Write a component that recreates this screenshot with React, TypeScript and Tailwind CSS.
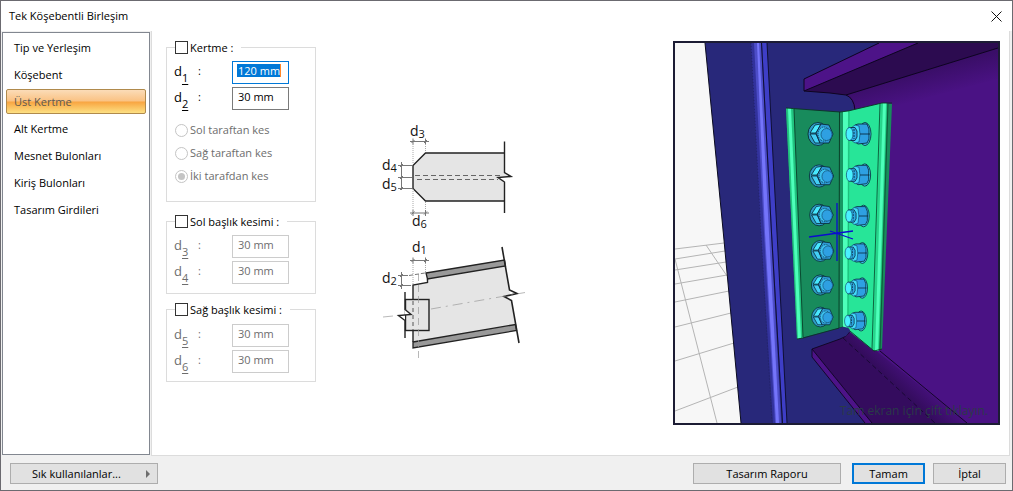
import React from "react";

const menuItems = [
  "Tip ve Yerleşim",
  "Köşebent",
  "Üst Kertme",
  "Alt Kertme",
  "Mesnet Bulonları",
  "Kiriş Bulonları",
  "Tasarım Girdileri",
];

const cutSides = ["Sol taraftan kes", "Sağ taraftan kes", "İki tarafdan kes"];

const leftBolts = [
  { x: 820, y: 134, s: 1 },
  { x: 821, y: 176, s: 0.97 },
  { x: 821, y: 215, s: 0.94 },
  { x: 822, y: 251, s: 0.91 },
  { x: 822, y: 285, s: 0.88 },
  { x: 822, y: 317, s: 0.86 },
];

const rightBolts = [
  { x: 858, y: 134, s: 1 },
  { x: 858, y: 175, s: 0.97 },
  { x: 857, y: 216, s: 0.94 },
  { x: 856, y: 253, s: 0.91 },
  { x: 856, y: 288, s: 0.89 },
  { x: 855, y: 321, s: 0.87 },
];

type FieldProps = {
  index: number;
  value: string;
  disabled?: boolean;
  focused?: boolean;
};

const Field = ({ index, value, disabled, focused }: FieldProps) => {
  const id = `d${index}`;
  return (
    <div className="flex h-[23px] items-start">
      <label
        htmlFor={id}
        className={`flex w-[58px] text-[13px] leading-5 ${disabled ? "text-[#6d6d6d]" : "text-black"}`}
      >
        <span>d</span>
        <span className="mt-[7px] w-4 text-[11px] underline underline-offset-2">
          {index}
        </span>
        <span className="text-[11px]">:</span>
      </label>
      <div className="relative">
        <input
          id={id}
          type="text"
          defaultValue={value}
          disabled={disabled}
          className={`block h-[23px] w-[57px] border bg-white px-[5px] pb-1 text-[11px] leading-4 outline-none ${
            focused
              ? "border-[#0078d7] text-transparent"
              : disabled
                ? "border-[#cccccc] text-[#6d6d6d]"
                : "border-[#7a7a7a] text-black"
          }`}
        />
        {focused && (
          <span className="pointer-events-none absolute left-[5px] top-[3px] whitespace-nowrap border-r border-[#ff8728] bg-[#0078d7] pl-px text-[11px] leading-[13px] text-white">
            {value}
          </span>
        )}
      </div>
    </div>
  );
};

type GroupProps = {
  title: string;
  className?: string;
  children: React.ReactNode;
};

const Group = ({ title, className, children }: GroupProps) => (
  <fieldset className={`w-[150px] border border-[#dcdcdc] px-[7px] ${className}`}>
    <legend className="ml-px h-[13px] pr-2">
      <label className="flex h-[13px] items-center gap-[2px] text-[11px] leading-[13px]">
        <input
          type="checkbox"
          className="size-[13px] appearance-none border border-[#333333] bg-white"
        />
        {title}
      </label>
    </legend>
    {children}
  </fieldset>
);

const SectionDrawing = () => (
  <svg
    viewBox="380 120 145 245"
    className="ml-16 mt-[89px] h-[245px] w-[145px] shrink-0"
    fill="none"
    stroke="#222"
    fontFamily="'Open Sans', 'Noto Sans', sans-serif"
  >
    {/* plan view of the flange */}
    <path
      d="M504 153H425.5L413 165.5V188.5L425.5 201H504V180L498 177.5L509 176.5L504 172Z"
      fill="#e5e5e5"
      stroke="none"
    />
    <path d="M504 153H425.5L413 165.5V188.5L425.5 201H504" strokeWidth="1.4" />
    <path
      d="M504.5 141.5V172.5L511 176.5L498 177.5L504.5 182V213"
      strokeWidth="1.4"
    />
    <path
      d="M415 175.5H500M417 179.5H498"
      stroke="#666"
      strokeDasharray="5 3"
    />
    <g stroke="#777" strokeWidth="1">
      <path d="M410 141.5H429M410 213H429M413 138.500v6M425.5 138.500v6M413 210v6M425.5 210v6M401.5 162v28M398 165.500h14M398 177.500h14M398 188.500h14" />
      <path d="M411.5 143l3-3M424 143l3-3M411.5 214.500l3-3M424 214.500l3-3M400 167l3-3M400 179l3-3M400 190l3-3" />
      <path
        d="M413 144V164M425.5 144V152M413 189V210M425.5 202V210"
        stroke="#aaa"
        strokeDasharray="1 1"
      />
    </g>
    {/* side view of the notched beam */}
    <path
      d="M413 285L427 282.5L426 273L505 259.5L510 294L503.5 297L511 300L516 329L413 348Z"
      fill="#e5e5e5"
      stroke="none"
    />
    <path d="M426 273L504.5 260L505.5 266L427.5 279Z" fill="#999" strokeWidth="1.3" />
    <path d="M413 342L515.5 324.5L516.5 330.5L413 348Z" fill="#999" strokeWidth="1.3" />
    <path d="M427.5 279V282.5L413 285V299M413 331V342" strokeWidth="1.4" />
    <path
      d="M502 247L509.5 290L517 293.5L504 296.5L511.5 300.5L519 343"
      strokeWidth="1.6"
    />
    <rect x="405.5" y="299.5" width="23.5" height="31" fill="#e5e5e5" strokeWidth="1.4" />
    <path d="M398.5 315.5L411 314.5L405 309V321Z" fill="#fff" stroke="none" />
    <path d="M405 292V309.5L411 314.5L398.5 315.5L405 320.5V338" strokeWidth="1.4" />
    <path d="M413 301V330" strokeDasharray="4 3" stroke="#555" />
    <path
      d="M383 317L398 315.5M431 309L528 292"
      stroke="#999"
      strokeWidth="0.7"
      strokeDasharray="10 5 2 5"
    />
    <path d="M418.5 274V360" stroke="#999" strokeWidth="0.7" strokeDasharray="7 4" />
    <g stroke="#777" strokeWidth="1">
      <path d="M410 260.5H429M413 257.500v6M425.5 257.500v6M411.5 262l3-3M424 262l3-3M401.5 272V289M398 275.500h10M398 285.500h13M400 277l3-3M400 287l3-3" />
      <path d="M409 275.5L425 273" strokeDasharray="4 2" />
      <path d="M413 263V284M425.5 263V273" stroke="#aaa" strokeDasharray="1 1" />
    </g>
    <g fill="#111" stroke="none" fontSize="14">
      <text x="410" y="136">d<tspan fontSize="11" dy="2">3</tspan></text>
      <text x="382" y="170">d<tspan fontSize="11" dy="2">4</tspan></text>
      <text x="382" y="189">d<tspan fontSize="11" dy="2">5</tspan></text>
      <text x="412" y="226">d<tspan fontSize="11" dy="2">6</tspan></text>
      <text x="412" y="252">d<tspan fontSize="11" dy="2">1</tspan></text>
      <text x="382" y="283">d<tspan fontSize="11" dy="2">2</tspan></text>
    </g>
  </svg>
);

const LeftBolt = ({ x, y, s }: { x: number; y: number; s: number }) => (
  <g
    transform={`translate(${x} ${y}) scale(${s})`}
    stroke="#06202e"
    strokeWidth="0.8"
    strokeLinejoin="round"
  >
    <ellipse cx="-2" cy="0" rx="10" ry="11.5" fill="#2f9fc8" />
    <path d="M-10-1L-5-9L1-10L-4-1Z" fill="#48e8ff" />
    <path d="M-10 0H-4L0 9L-5 9Z" fill="#43cff5" />
    <path d="M-4-1L1-10L9-9L13 0L9 9L0 9Z" fill="#2f9bd6" />
    <ellipse cx="4" cy="0" rx="6" ry="7" fill="#3cc0ee" strokeDasharray="1 1" />
    <ellipse cx="6.5" cy="0.5" rx="5.5" ry="6" fill="#2ea0e2" stroke="#15557c" />
  </g>
);

const RightBolt = ({ x, y, s }: { x: number; y: number; s: number }) => (
  <g
    transform={`translate(${x} ${y}) scale(${s})`}
    stroke="#06202e"
    strokeWidth="0.8"
    strokeLinejoin="round"
  >
    <ellipse cx="7" cy="0" rx="6" ry="11.5" fill="#3cc8f2" />
    <path d="M-3-9L0-10L9-10L11-5V5L9 9L0 10L-3 8Z" fill="#2ea0e2" />
    <path d="M-7-6L-3-9L1-8L2 0L1 8L-3 9L-7 6Z" fill="#43d9fa" stroke="#15557c" />
    <path d="M2 0H12" />
    <path d="M-9-6.500H-3L-1-3V3L-3 6.500H-9Z" fill="#2fa9e4" />
    <path d="M-4-5V5" strokeDasharray="2 1" />
    <ellipse cx="-8.5" cy="0" rx="3.5" ry="6.5" fill="#4af0ff" stroke="#15557c" />
  </g>
);

const ModelView = () => (
  <svg
    viewBox="675 43 323 380"
    className="block h-auto w-full"
    role="img"
    aria-label="Birleşim modeli"
  >
    <defs>
      <linearGradient id="webTop" gradientUnits="userSpaceOnUse" x1="915" y1="73" x2="922" y2="100">
        <stop offset="0" stopColor="#3a0e68" />
        <stop offset="1" stopColor="#4a1284" />
      </linearGradient>
      <linearGradient id="webBottom" gradientUnits="userSpaceOnUse" x1="889" y1="380" x2="907" y2="361">
        <stop offset="0" stopColor="#330c5c" />
        <stop offset="1" stopColor="#4a1284" />
      </linearGradient>
    </defs>
    <rect x="675" y="43" width="323" height="380" fill="#f7f7f7" />
    <path
      d="M675 249L724 243M675 259L725 251M675 270L726 262M675 284L727 275M675 302L729 291M675 327L731 313M675 361L734 343M675 411L738 387M675 259L717 423M706 245L727 276"
      stroke="#b4b4b4"
      fill="none"
    />
    {/* column */}
    <path d="M705 43L724 240L741 423H998V43Z" fill="#28287a" />
    <path d="M705 43L724 240L741 423" fill="none" stroke="#0b0b20" />
    <path d="M751 43L762 43L772 233L782 423L773 423L761 233Z" fill="#32329c" />
    <path d="M754 43L761 43L771 233L781 423L775 423L764 233Z" fill="#4d4dc8" />
    <path d="M757 43L759 43L769 233L779 423L776 423L765 233Z" fill="#7474fa" />
    <path d="M762 43L767 43L777 233L787 423L783 423L772 233Z" fill="#3e3ec6" />
    <path d="M761.5 43L771.5 233L782.5 423M767 43L777 233L787 423" fill="none" stroke="#0b0b28" strokeWidth="0.9" />
    <path d="M751 43L761 233L772 423" fill="none" stroke="#18184e" strokeWidth="0.5" strokeDasharray="1 2" />
    {/* beam web and flanges */}
    <path d="M846 95L998 48V423H935L843 338L850 330L855 109Q854 98 846 95Z" fill="#4a1284" />
    <path d="M846 95L998 48V79L854 117Q855 99 846 95Z" fill="url(#webTop)" />
    <path d="M804 79L879 43H918L804 91Z" fill="#4d1388" />
    <path d="M804 91L918 43H998V48L846 95L830 93Z" fill="#2c0b50" />
    <path
      d="M804 91V79L879 43M804 91L918 43M804 91L830 93L846 95L998 48M846 95Q854 98 855 110"
      fill="none"
      stroke="#0e0420"
    />
    <path d="M850 330L967 423H935L843 338Z" fill="url(#webBottom)" />
    <path d="M812 349L843 338L935 423H872Z" fill="#340c5e" />
    <path d="M812 349L872 423H865L812 357Z" fill="#4d1388" />
    <path
      d="M872 423L812 349V357L865 423M812 349L840 339Q850 335 850 329M880 351L967 423"
      fill="none"
      stroke="#0e0420"
      strokeWidth="0.9"
    />
    <path d="M843 338L935 423" fill="none" stroke="#0e0420" strokeWidth="0.7" strokeDasharray="5 3" />
    {/* connection angle */}
    <path d="M786 108L840 112L839 328L797 339Z" fill="#188b5c" />
    <path d="M786 108L794 108L803 338L797 339Z" fill="#22c480" />
    <path d="M788 108L791 108L801 338L798 339Z" fill="#4dffba" />
    <path d="M794 109L803 337" stroke="#0b4a30" />
    <path d="M840 112L848 111L882 103L874 351L849 331L843 327L839 328Z" fill="#27e598" />
    <path d="M839 112L844 112L843 327L839 328Z" fill="#179763" />
    <path d="M843 112L848 111L847 329L843 327Z" fill="#4dffba" />
    <path d="M849 111L848 330" stroke="#1dbb79" />
    <path d="M839.5 112L839 328" stroke="#0a4028" />
    <path d="M882 103L892 104L882 349L874 351Z" fill="#188b5c" />
    <path d="M881 103L887 103L879 351L873 350Z" fill="#27d38a" />
    <path d="M883 103L886 103L878 351L875 351Z" fill="#4dffba" />
    <path d="M880 104L872 349M888 104L880 350" stroke="#0b5636" strokeWidth="0.9" />
    <path
      d="M786 108L840 112L848 111L882 103H892M797 339L803 338L843 327L850 331L874 351L882 349"
      fill="none"
      stroke="#0a3322"
      strokeWidth="0.9"
    />
    {leftBolts.map((bolt) => (
      <LeftBolt key={bolt.y} {...bolt} />
    ))}
    {rightBolts.map((bolt) => (
      <RightBolt key={bolt.y} {...bolt} />
    ))}
    <path d="M839 328L843 327Q850 327 850 331L846 336L839 337Z" fill="#28287a" />
    <path
      d="M837 203V261M809 237L853 231M830 231L853 239"
      stroke="#0c0ccf"
      strokeWidth="1.3"
      fill="none"
    />
    <text
      x="840"
      y="415"
      fontSize="12"
      fill="#2a3a48"
      fontFamily="'Open Sans', 'Noto Sans', sans-serif"
    >
      Tam ekran için çift tıklayın.
    </text>
  </svg>
);

const buttonClass =
  "h-[21px] border bg-[#e1e1e1] text-center text-[11px] leading-4 text-black";

export default function App() {
  return (
    <div className="flex min-h-screen flex-col border border-[#6b6a70] bg-[#f0f0f0] font-['Open_Sans','Noto_Sans',sans-serif] text-[11px] text-black">
      <header className="flex h-[30px] items-center justify-between bg-white pl-2 pr-[10px]">
        <h1 className="text-[11px] leading-4">Tek Köşebentli Birleşim</h1>
        <button type="button" aria-label="Kapat" className="size-[11px]">
          <svg viewBox="0 0 11 11" className="size-full" stroke="#111" fill="none">
            <path d="M0.5 0.5L10.5 10.5M10.5 0.5L0.5 10.5" />
          </svg>
        </button>
      </header>

      <div className="flex flex-1 pl-px pr-[2px]">
        <nav className="my-px flex w-[148px] shrink-0 flex-col gap-[2px] border border-[#828790] bg-white px-[3px] py-[2px]">
          {menuItems.map((item) => (
            <button
              key={item}
              type="button"
              className={`h-[25px] rounded-[2px] border px-[7px] text-left text-[11px] leading-4 ${
                item === "Üst Kertme"
                  ? "border-[#b08a4c] bg-[linear-gradient(#fbdcb8,#fac283_48%,#f8a541_52%,#fde083)] text-[#5c5850]"
                  : "border-transparent text-black"
              }`}
            >
              {item}
            </button>
          ))}
        </nav>

        <main className="ml-px flex flex-1 items-start border-b border-l border-r border-[#dcdcdc] bg-white pb-[30px] pl-[14px] pr-[9px]">
          <form className="mt-[10px] shrink-0">
            <Group title="Kertme :" className="h-[161px]">
              <div className="mt-[7px] flex flex-col gap-[3px]">
                <Field index={1} value="120 mm" focused />
                <Field index={2} value="30 mm" />
              </div>
              <div className="ml-px mt-[13px] flex flex-col gap-[9px]">
                {cutSides.map((side, i) => (
                  <label
                    key={side}
                    className="flex h-[14px] items-center gap-[2px] text-[11px] leading-[14px] text-[#6d6d6d]"
                  >
                    <input
                      type="radio"
                      name="side"
                      disabled
                      defaultChecked={i === 2}
                      className="size-[13px] appearance-none rounded-full border border-[#c4c4c4] bg-white bg-clip-content p-[2px] checked:bg-[#c4c4c4]"
                    />
                    {side}
                  </label>
                ))}
              </div>
            </Group>
            <Group title="Sol başlık kesimi :" className="mt-[13px] h-[79px]">
              <div className="mt-[7px] flex flex-col gap-[3px]">
                <Field index={3} value="30 mm" disabled />
                <Field index={4} value="30 mm" disabled />
              </div>
            </Group>
            <Group title="Sağ başlık kesimi :" className="mt-[9px] h-[79px]">
              <div className="mt-2 flex flex-col gap-[3px]">
                <Field index={5} value="30 mm" disabled />
                <Field index={6} value="30 mm" disabled />
              </div>
            </Group>
          </form>

          <SectionDrawing />

          <div className="ml-auto mt-[10px] w-[327px] shrink-0 border-2 border-[#1c1c34]">
            <ModelView />
          </div>
        </main>
      </div>

      <footer className="flex items-center px-[6px] pb-[6px] pl-[9px] pt-[7px]">
        <button
          type="button"
          className={`${buttonClass} flex w-[148px] items-center border-[#adadad] pl-[21px] pr-[7px]`}
        >
          Sık kullanılanlar...
          <svg viewBox="0 0 4 8" className="ml-auto h-2 w-1" fill="#6d6d6d">
            <path d="M0 0L4 4L0 8Z" />
          </svg>
        </button>
        <button type="button" className={`${buttonClass} ml-auto w-[148px] border-[#adadad]`}>
          Tasarım Raporu
        </button>
        <button
          type="button"
          className="ml-[11px] h-[21px] w-[73px] border-2 border-[#0078d7] bg-[#e1e1e1] text-center text-[11px] leading-4 text-black"
        >
          Tamam
        </button>
        <button type="button" className={`${buttonClass} ml-2 w-[73px] border-[#adadad]`}>
          İptal
        </button>
      </footer>
    </div>
  );
}
